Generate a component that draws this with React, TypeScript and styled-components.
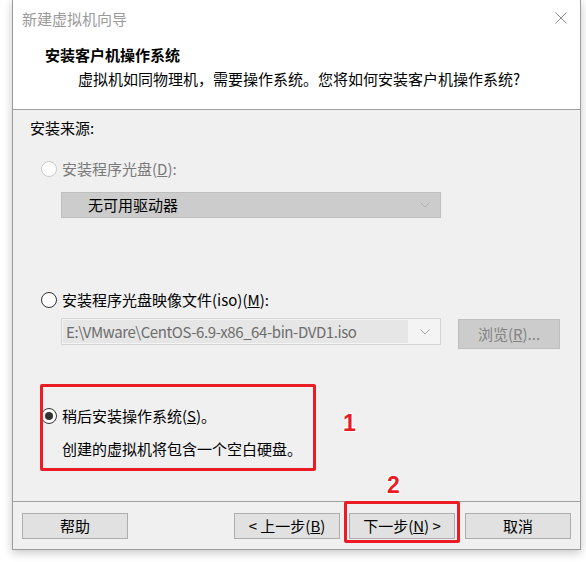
import React from "react";
import styled, { createGlobalStyle } from "styled-components";

const Global = createGlobalStyle`
  html, body { margin: 0; padding: 0; background: #ffffff; }
  body { font-family: "Noto Sans CJK SC", "Noto Sans", sans-serif; font-size: 15px; color: #000; }
  * { box-sizing: border-box; }
`;

const Page = styled.div`
  width: 586px;
  height: 562px;
  padding-left: 12px;
  background: #ffffff;
  overflow: hidden;
`;

const Window = styled.div`
  position: relative;
  width: 569px;
  border-left: 1px solid #9c9c9c;
  border-right: 1px solid #9c9c9c;
  border-bottom: 1px solid #9c9c9c;
  background: #f0f0f0;
  box-shadow: 0 3px 9px rgba(0, 0, 0, 0.22);
`;

const Header = styled.div`
  height: 110px;
  background: #ffffff;
  border-bottom: 1px solid #a0a0a0;
`;

const TitleBar = styled.div`
  height: 38px;
  display: flex;
  align-items: center;
  justify-content: space-between;
  padding: 0 13px 0 9px;
`;

const TitleText = styled.span`
  color: #9a9a9a;
  font-size: 15px;
  line-height: 20px;
`;

const CloseIcon = styled.svg`
  width: 12px;
  height: 12px;
  margin-top: -2px;
`;

const Heading = styled.div`
  margin: 6px 0 0 32px;
  font-weight: bold;
  line-height: 22px;
`;

const SubHeading = styled.div`
  margin: 2px 0 0 65px;
  line-height: 22px;
`;

const Body = styled.div`
  height: 391px;
  padding: 8px 0 0 17px;
`;

const SourceLabel = styled.div`
  line-height: 20px;
`;

const Options = styled.div`
  margin-left: 11px;
  display: flex;
  flex-direction: column;
`;

const RadioRow = styled.label<{ $top: number; $disabled?: boolean }>`
  display: flex;
  align-items: center;
  gap: 5px;
  margin-top: ${(p) => p.$top}px;
  line-height: 20px;
  color: ${(p) => (p.$disabled ? "#7a7a7a" : "#000")};
`;

const RadioDot = styled.span<{ $checked?: boolean; $disabled?: boolean }>`
  width: 16px;
  height: 16px;
  border-radius: 50%;
  background: #ffffff;
  border: 1px solid ${(p) => (p.$disabled ? "#cacaca" : "#333333")};
  display: flex;
  align-items: center;
  justify-content: center;
  flex: none;
  &::after {
    content: "";
    display: ${(p) => (p.$checked ? "block" : "none")};
    width: 8px;
    height: 8px;
    border-radius: 50%;
    background: #333333;
  }
`;

const Combo = styled.div<{ $top: number; $height: number; $filled?: boolean }>`
  margin: ${(p) => p.$top}px 0 0 20px;
  width: 380px;
  height: ${(p) => p.$height}px;
  display: flex;
  align-items: center;
  padding: 1px 10px 1px 1px;
  background: ${(p) => (p.$filled ? "#cccccc" : "#f4f4f4")};
  border: 1px solid ${(p) => (p.$filled ? "#bfbfbf" : "#d4d4d4")};
`;

const ComboValue = styled.span<{ $field?: boolean }>`
  flex: 1;
  align-self: stretch;
  display: flex;
  align-items: center;
  padding-left: ${(p) => (p.$field ? "3px" : "25px")};
  background: ${(p) => (p.$field ? "#e6e6e6" : "transparent")};
  color: ${(p) => (p.$field ? "#6d6d6d" : "#000")};
  margin-right: ${(p) => (p.$field ? "12px" : "0")};
  letter-spacing: ${(p) => (p.$field ? "-0.4px" : "0")};
  line-height: 20px;
  white-space: nowrap;
`;

const Chevron = styled.svg`
  width: 10px;
  height: 6px;
  flex: none;
`;

const FileRow = styled.div`
  display: flex;
  align-items: flex-start;
  margin-top: 8px;
`;

const BrowseButton = styled.button`
  margin: 1px 0 0 17px;
  width: 102px;
  height: 30px;
  background: #cccccc;
  border: 1px solid #bfbfbf;
  color: #838383;
  font: inherit;
  line-height: 20px;
  padding: 0;
`;

const Description = styled.div`
  margin: 13px 0 0 21px;
  line-height: 20px;
`;

const Footer = styled.div`
  border-top: 1px solid #a0a0a0;
  display: flex;
  align-items: center;
  padding: 11px 9px 10px 9px;
`;

const Button = styled.button<{ $gap?: number }>`
  width: 106px;
  height: 26px;
  margin-left: ${(p) => p.$gap ?? 0}px;
  background: #e1e1e1;
  border: 1px solid #adadad;
  font: inherit;
  color: #000;
  line-height: 20px;
  padding: 0;
`;

const Spacer = styled.div`
  flex: 1;
`;

const RedBox = styled.div<{ $x: number; $y: number; $w: number; $h: number }>`
  position: absolute;
  left: ${(p) => p.$x}px;
  top: ${(p) => p.$y}px;
  width: ${(p) => p.$w}px;
  height: ${(p) => p.$h}px;
  border: 3px solid #ec1c24;
  border-radius: 2px;
  pointer-events: none;
`;

const Marker = styled.div<{ $x: number; $y: number }>`
  position: absolute;
  left: ${(p) => p.$x}px;
  top: ${(p) => p.$y}px;
  color: #ec1c24;
  font-family: "Liberation Sans", Arial, sans-serif;
  font-weight: bold;
  font-size: 23px;
  line-height: 24px;
  text-shadow: 1px 1px 0 #fff, -1px -1px 0 #fff, 1px -1px 0 #fff, -1px 1px 0 #fff,
    0 1px 0 #fff, 1px 0 0 #fff, 0 -1px 0 #fff, -1px 0 0 #fff;
`;

const ChevronIcon = ({ color }: { color: string }) => (
  <Chevron viewBox="0 0 10 6">
    <path d="M0.5 0.5 L5 5 L9.5 0.5" fill="none" stroke={color} strokeWidth="1" />
  </Chevron>
);

export default function App() {
  return (
    <>
      <Global />
      <Page>
        <Window>
          <Header>
            <TitleBar>
              <TitleText>新建虚拟机向导</TitleText>
              <CloseIcon viewBox="0 0 12 12">
                <path d="M0.5 0.5 L11.5 11.5 M11.5 0.5 L0.5 11.5" stroke="#8a8a8a" strokeWidth="1" fill="none" />
              </CloseIcon>
            </TitleBar>
            <Heading>安装客户机操作系统</Heading>
            <SubHeading>虚拟机如同物理机，需要操作系统。您将如何安装客户机操作系统?</SubHeading>
          </Header>
          <Body>
            <SourceLabel>安装来源:</SourceLabel>
            <Options>
              <RadioRow $top={21} $disabled>
                <RadioDot $disabled />
                <span>
                  安装程序光盘(<u>D</u>):
                </span>
              </RadioRow>
              <Combo $top={13} $height={26} $filled>
                <ComboValue>无可用驱动器</ComboValue>
                <ChevronIcon color="#b0b0b0" />
              </Combo>
              <RadioRow $top={72}>
                <RadioDot />
                <span>
                  安装程序光盘映像文件(iso)(<u>M</u>):
                </span>
              </RadioRow>
              <FileRow>
                <Combo $top={0} $height={27}>
                  <ComboValue $field>E:\VMware\CentOS-6.9-x86_64-bin-DVD1.iso</ComboValue>
                  <ChevronIcon color="#a8a8a8" />
                </Combo>
                <BrowseButton>
                  浏览(<u>R</u>)...
                </BrowseButton>
              </FileRow>
              <RadioRow $top={57}>
                <RadioDot $checked />
                <span>
                  稍后安装操作系统(<u>S</u>)。
                </span>
              </RadioRow>
              <Description>创建的虚拟机将包含一个空白硬盘。</Description>
            </Options>
          </Body>
          <Footer>
            <Button>帮助</Button>
            <Spacer />
            <Button>
              &lt; 上一步(<u>B</u>)
            </Button>
            <Button $gap={9}>
              下一步(<u>N</u>) &gt;
            </Button>
            <Button $gap={10}>取消</Button>
          </Footer>
          <RedBox $x={27} $y={384} $w={276} $h={87} />
          <Marker $x={330} $y={411}>1</Marker>
          <RedBox $x={331} $y={501} $w={116} $h={42} />
          <Marker $x={374} $y={473}>2</Marker>
        </Window>
      </Page>
    </>
  );
}
